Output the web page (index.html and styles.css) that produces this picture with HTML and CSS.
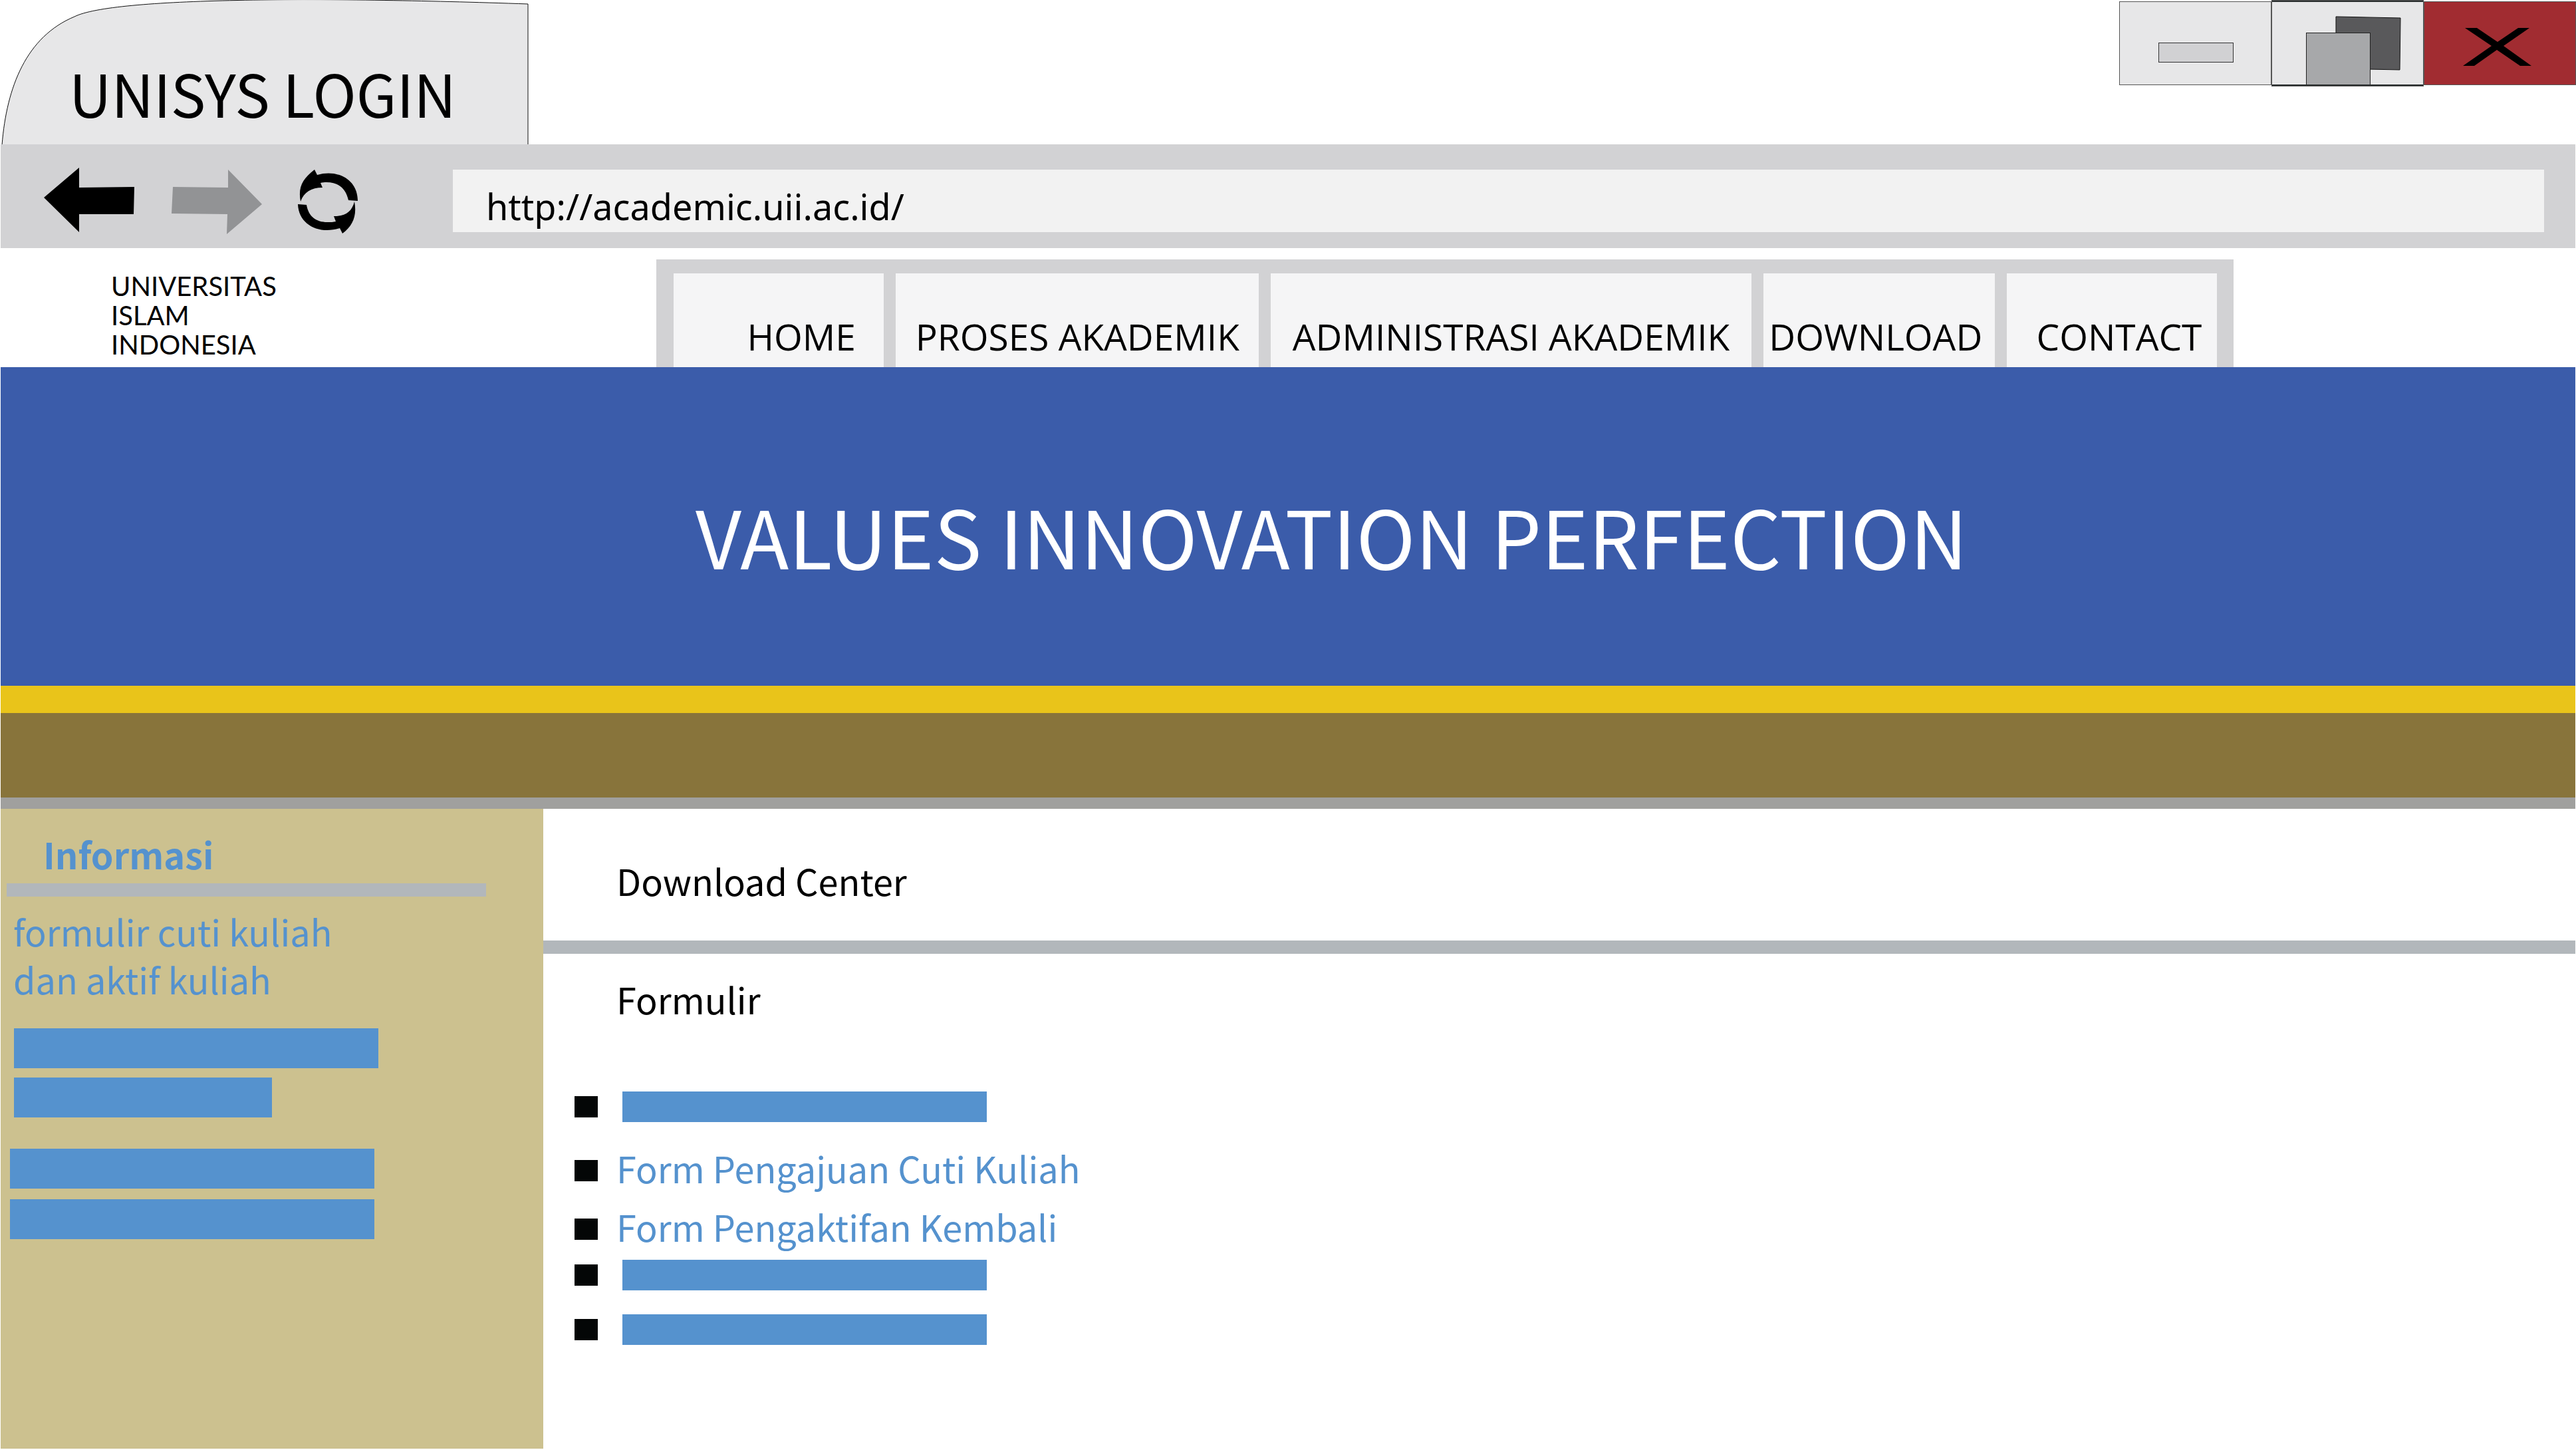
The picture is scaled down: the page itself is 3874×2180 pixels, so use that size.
FILE: index.html
```html
<!DOCTYPE html>
<html lang="id">
<head>
<meta charset="utf-8">
<title>UNISYS LOGIN</title>
<link rel="stylesheet" href="styles.css">
</head>
<body>
<div class="titlebar">
  <div class="tab">
    <svg class="tab-shape" viewBox="0 0 798 217" preserveAspectRatio="none" aria-hidden="true">
      <path d="M3 218C10 130 40 55 112 25C170 -4 480 -5 794 6V218" fill="#e7e7e8" stroke="#111" stroke-width="1"/>
    </svg>
    <span class="tab-title">UNISYS LOGIN</span>
  </div>
  <div class="window-buttons">
    <button class="window-button" type="button" aria-label="Minimize">
      <svg viewBox="3187 2 229 126" aria-hidden="true">
        <rect x="3246.500" y="64.500" width="112" height="29" fill="#d1d1d3" stroke="#333"/>
      </svg>
    </button>
    <button class="window-button window-button-restore" type="button" aria-label="Restore">
      <svg viewBox="3416 3 229 124" aria-hidden="true">
        <path d="M3513 25L3610 27L3609 105L3513 103Z" fill="#59595b" stroke="#111"/>
        <rect x="3468.500" y="49.500" width="96" height="78" fill="#a7a8aa" stroke="#222"/>
      </svg>
    </button>
    <button class="window-button window-button-close" type="button" aria-label="Close">
      <svg viewBox="3645 2 229 126" aria-hidden="true">
        <path d="M3707 42H3725L3756 63L3787 42H3804L3765 69L3807 99H3790L3755 75L3721 99H3704L3747 69Z" fill="#000"/>
      </svg>
    </button>
  </div>
</div>

<div class="page">
  <div class="toolbar">
    <button class="tool" type="button" aria-label="Back">
      <svg width="136" height="100" viewBox="66 252 136 100" aria-hidden="true">
        <path d="M66 297L119 252V282L202 281L201 322H119V349Z" fill="#000"/>
      </svg>
    </button>
    <button class="tool" type="button" aria-label="Forward">
      <svg width="138" height="100" viewBox="256 252 138 100" aria-hidden="true">
        <path d="M394 307L343 255V282L260 281L258 321L342 322L341 352Z" fill="#929395"/>
      </svg>
    </button>
    <button class="tool" type="button" aria-label="Reload">
      <svg width="91" height="100" viewBox="448 252 91 100" aria-hidden="true">
        <path d="M473 255L477 263C508 254 538 270 538 302L524 301C520 283 509 274 491 274C488 274 485 274 482 275L485 282C468 282 457 289 452 303C448 281 455 269 473 255Z" fill="#000"/>
        <path d="M515 351L511 343C480 353 449 338 448 307L461 308C464 326 476 334 492 334C498 334 501 334 505 333L502 325C519 325 529 319 533 303C537 324 531 339 515 351Z" fill="#000"/>
      </svg>
    </button>
    <input class="address" type="text" aria-label="Address" value="http://academic.uii.ac.id/">
  </div>

  <header class="site-header">
    <p class="brand">UNIVERSITAS<br>ISLAM<br>INDONESIA</p>
    <nav class="menu">
      <a class="menu-item menu-home" href="#">HOME</a>
      <a class="menu-item" href="#">PROSES AKADEMIK</a>
      <a class="menu-item" href="#">ADMINISTRASI AKADEMIK</a>
      <a class="menu-item menu-download" href="#">DOWNLOAD</a>
      <a class="menu-item menu-contact" href="#">CONTACT</a>
    </nav>
  </header>

  <div class="hero">
    <p class="hero-title">VALUES INNOVATION PERFECTION</p>
  </div>
  <div class="strip"></div>

  <div class="columns">
    <aside class="sidebar">
      <h2 class="sidebar-title">Informasi</h2>
      <hr class="sidebar-rule">
      <a class="sidebar-link" href="#">formulir cuti kuliah<br>dan aktif kuliah</a>
      <div class="bars">
        <span class="bar bar-tall"></span>
        <span class="bar bar-tall bar-short"></span>
      </div>
      <div class="bars bars-outer">
        <span class="bar bar-tall"></span>
        <span class="bar bar-tall"></span>
      </div>
    </aside>
    <main class="content">
      <h1 class="heading">Download Center</h1>
      <hr class="content-rule">
      <h2 class="heading">Formulir</h2>
      <ul class="forms">
        <li class="form-row"><span class="bar"></span></li>
        <li class="form-row form-row-first-link"><a class="form-link" href="#">Form Pengajuan Cuti Kuliah</a></li>
        <li class="form-row form-row-link"><a class="form-link" href="#">Form Pengaktifan Kembali</a></li>
        <li class="form-row form-row-after-link"><span class="bar"></span></li>
        <li class="form-row form-row-spaced"><span class="bar"></span></li>
      </ul>
    </main>
  </div>
</div>
</body>
</html>
```

FILE: styles.css
```css
* {
  box-sizing: border-box;
}

body {
  margin: 0;
  min-height: 100vh;
  display: flex;
  flex-direction: column;
  background: #fff;
  color: #000;
  font-family: "Noto Sans CJK SC", "Open Sans", sans-serif;
}

h1, h2, p, ul, hr {
  margin: 0;
}

a {
  text-decoration: none;
}

button {
  padding: 0;
  border: 0;
  background: none;
}

svg {
  display: block;
}

/* Browser frame */
.titlebar {
  display: flex;
  justify-content: space-between;
  align-items: flex-start;
}

.tab {
  display: grid;
  width: 798px;
  height: 217px;
}

.tab-shape {
  grid-area: 1 / 1;
  width: 100%;
  height: 100%;
}

.tab-title {
  grid-area: 1 / 1;
  padding: 89px 0 0 104px;
  font-size: 88px;
  line-height: 100px;
  white-space: nowrap;
}

.window-buttons {
  display: flex;
  height: 130px;
  align-items: center;
}

.window-button {
  width: 229px;
  height: 126px;
  background: #e7e7e8;
  outline: 1px solid #555;
  outline-offset: -1px;
}

.window-button svg {
  width: 100%;
  height: 100%;
}

.window-button-restore {
  height: 130px;
  border-top: 3px solid #2b2f2f;
  border-bottom: 3px solid #2b2f2f;
}

.window-button-close {
  background: #a12c31;
}

.page {
  flex: 1;
  display: flex;
  flex-direction: column;
  padding: 0 1px 2px;
}

.toolbar {
  display: flex;
  align-items: center;
  gap: 54px;
  padding: 35px 47px 21px 65px;
  background: #d2d2d4;
}

.address {
  flex: 1;
  min-width: 0;
  height: 94px;
  margin-left: 88px;
  padding: 16px 48px 0 50px;
  border: 0;
  background: #f2f2f2;
  color: #000;
  font-family: "Noto Sans", sans-serif;
  font-size: 54px;
}

/* University header */
.site-header {
  display: flex;
  height: 179px;
}

.brand {
  width: 986px;
  padding: 35px 0 0 166px;
  font-family: Lato, sans-serif;
  font-size: 40px;
  line-height: 44px;
}

.menu {
  flex: 1;
  display: grid;
  grid-template-columns: 316fr 546fr 722fr 348fr 316fr;
  gap: 18px;
  margin: 17px 514px 0 0;
  padding: 21px 25px 0 26px;
  background: #d2d2d4;
}

.menu-item {
  display: flex;
  align-items: flex-end;
  justify-content: center;
  padding-bottom: 16px;
  background: #f5f5f6;
  color: #000;
  font-family: "Open Sans", sans-serif;
  font-size: 55px;
  line-height: 60px;
  white-space: nowrap;
}

.menu-home {
  padding-left: 68px;
}

.menu-download {
  padding-right: 10px;
}

.menu-contact {
  padding-left: 22px;
}

.hero {
  padding: 182px 0 157px 131px;
  background: #3b5caa;
  border-bottom: 41px solid #e9c41a;
}

.hero-title {
  color: #fff;
  font-size: 120px;
  line-height: 140px;
  text-align: center;
}

.strip {
  height: 144px;
  background: #88743b;
  border-bottom: 17px solid #a0a09e;
}

/* Sidebar and content */
.columns {
  flex: 1;
  display: flex;
  font-size: 54px;
  line-height: 72px;
}

.sidebar {
  width: 816px;
  padding-top: 38px;
  background: #ccc18f;
}

.sidebar-title {
  padding-left: 64px;
  color: #5592ce;
  font-size: 54px;
  line-height: 60px;
}

.sidebar-rule {
  width: 721px;
  height: 20px;
  margin: 14px 0 16px 9px;
  border: 0;
  background: #b2b7bb;
}

.sidebar-link {
  display: block;
  padding-left: 19px;
  color: #5592ce;
}

.bar {
  display: block;
  width: 548px;
  height: 46px;
  background: #5592ce;
}

.bars {
  display: flex;
  flex-direction: column;
  gap: 14px;
  padding: 38px 0 0 20px;
}

.bars-outer {
  gap: 16px;
  padding: 47px 0 0 14px;
}

.bar-tall {
  height: 60px;
}

.bar-short {
  width: 388px;
}

.content {
  flex: 1;
  padding-top: 72px;
}

.heading {
  padding-left: 110px;
  font-size: 54px;
  font-weight: 400;
}

.content-rule {
  height: 20px;
  margin: 54px 0 32px;
  border: 0;
  background: #b2b7bb;
}

.forms {
  padding: 103px 0 0 47px;
  list-style: none;
}

.form-row {
  display: flex;
  align-items: center;
  gap: 28px;
}

.form-row::before {
  content: "";
  width: 35px;
  height: 32px;
  background: #040606;
}

.form-row .bar {
  margin-left: 9px;
}

.form-row-first-link {
  margin-top: 33px;
}

.form-row-link {
  margin-top: 16px;
}

.form-row-first-link::before,
.form-row-link::before {
  margin-top: 8px;
}

.form-row-after-link {
  margin-top: 14px;
}

.form-row-spaced {
  margin-top: 36px;
}

.form-link {
  color: #5592ce;
}
```
